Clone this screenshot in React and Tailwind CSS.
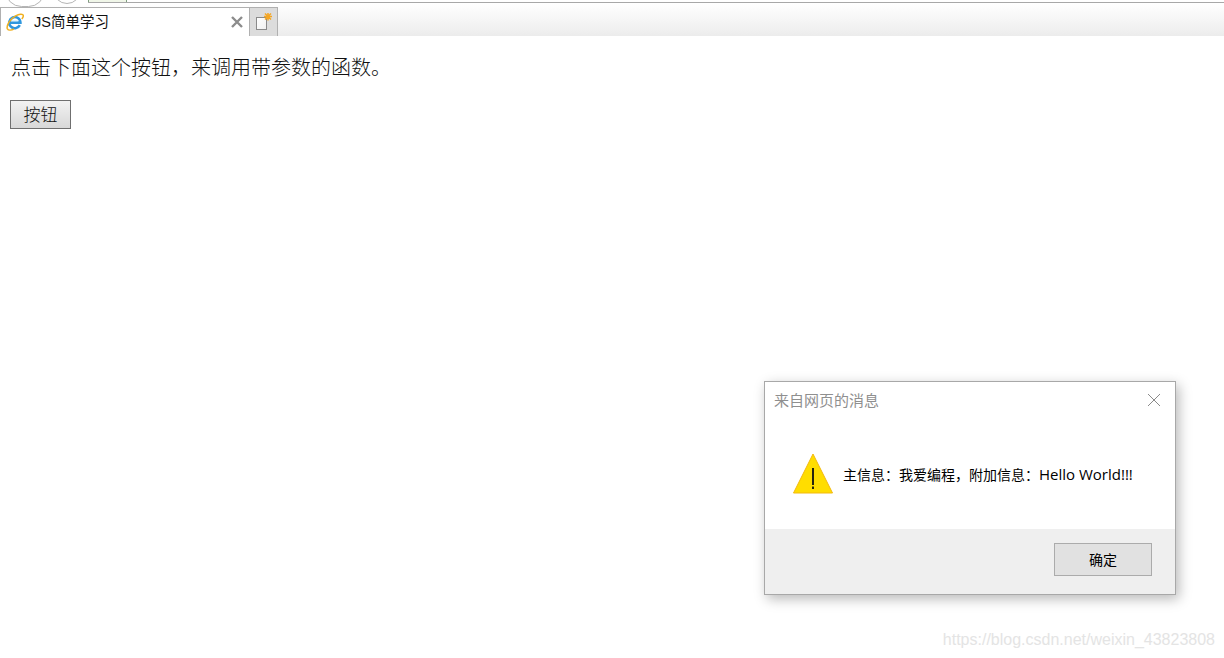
import React from "react";

const cjk = "font-['Liberation_Sans','Noto_Sans_CJK_SC',sans-serif]";

function IeIcon() {
  return (
    <svg width="18" height="18" viewBox="0 0 18 18" className="shrink-0">
      <path d="M13.8 12.2A5.6 5.6 0 1 1 14.4 9.6H4.6" fill="none" stroke="#2f97de" strokeWidth="2.6" />
      <path d="M5 8.2H11.8" stroke="#9fd6f5" strokeWidth="1" />
      <path d="M1.4 16C0.2 13 3.6 6 9.6 2.8C13 1 16.8 0.4 17.3 2.3C17.6 3.6 16.6 5 15.8 6" fill="none" stroke="#f0b020" strokeWidth="1.5" />
      <path d="M1.4 16C2.6 17.8 6 17 7.8 16" fill="none" stroke="#f0b020" strokeWidth="1.5" />
    </svg>
  );
}

function NewTabIcon() {
  return (
    <svg width="18" height="18" viewBox="0 0 18 18">
      <defs>
        <linearGradient id="ntp" x1="0" y1="0" x2="1" y2="1">
          <stop offset="0" stopColor="#ffffff" />
          <stop offset="1" stopColor="#f0f0f0" />
        </linearGradient>
      </defs>
      <rect x="1.5" y="4.5" width="10" height="12" fill="url(#ntp)" stroke="#8a8a8a" />
      <path d="M13 -0.5V7.5M9 3.5H17M10 0.5L16 6.5M16 0.5L10 6.5" stroke="#f5a623" strokeWidth="1.5" />
    </svg>
  );
}

export default function App() {
  return (
    <div className={`relative h-[658px] w-[1224px] overflow-hidden bg-white ${cjk}`}>
      <header className="relative flex h-[36px] flex-col bg-gradient-to-b from-[#ffffff] from-[10%] to-[#ececec]">
        <div className="absolute left-[5px] top-[-26px] h-[33px] w-[40px] rounded-full border border-[#b5b5b5] bg-white" />
        <div className="absolute left-[53px] top-[-26px] h-[30px] w-[28px] rounded-full border border-[#b5b5b5] bg-white" />

        <div className="flex h-[7px] items-start pl-[88px]">
          <div className="flex h-[3px] flex-1 items-start border-b border-[#a8a8a8]">
            <div className="h-[2px] w-[39px] border-x border-[#7f9f7f] bg-[#f0f6e8]" />
          </div>
        </div>

        <div className="relative flex h-[29px]">
          <div className="flex w-[249px] items-center border-t border-l border-[#b0b0b0] bg-white pl-[5px] pr-[5px]">
            <IeIcon />
            <span className="ml-[10px] flex-1 text-[14.5px] leading-[20px] text-[#111]">JS简单学习</span>
            <svg width="14" height="14" viewBox="0 0 14 14">
              <path d="M2 2L12 12M12 2L2 12" stroke="#8c8c8c" strokeWidth="2.4" />
            </svg>
          </div>
          <div className="flex w-[29px] items-center justify-center border-x border-t border-[#b0b0b0] bg-[#dcdcdc]">
            <NewTabIcon />
          </div>
        </div>
      </header>

      <main className="px-[11px] pt-[20px]">
        <p className="text-[20px] leading-[24px] font-light text-[#111]">点击下面这个按钮，来调用带参数的函数。</p>
        <button className="ml-[-1px] mt-[20px] flex h-[29px] w-[61px] items-center justify-center border border-[#6f6f6f] bg-gradient-to-b from-[#f2f2f2] to-[#d8d8d8] pt-[2px] text-[17px] font-light text-[#111]">
          按钮
        </button>
      </main>

      <div className="absolute left-[764px] top-[381px] flex h-[214px] w-[412px] flex-col border border-[#a8a8a8] bg-white shadow-[3px_4px_12px_rgba(0,0,0,0.28)]">
        <div className="flex h-[37px] items-center justify-between pl-[9px] pr-[14px]">
          <span className="pt-[1px] text-[15px] text-[#8f8f8f]">来自网页的消息</span>
          <svg width="14" height="14" viewBox="0 0 14 14" className="mt-[-1px]">
            <path d="M1 1L13 13M13 1L1 13" stroke="#8a8a8a" strokeWidth="1" />
          </svg>
        </div>
        <div className="flex flex-1 items-start pl-[28px] pt-[34px]">
          <svg width="40" height="41" viewBox="0 0 40 41" className="shrink-0">
            <path d="M20 1L39.5 40H0.5Z" fill="#ffdd00" stroke="#f2b90f" strokeWidth="1" />
            <path d="M20 15V32M20 33.5V36" stroke="#111" strokeWidth="1.8" />
          </svg>
          <span className="ml-[10px] mt-[11px] whitespace-nowrap text-[14px] leading-[20px] text-black">
            主信息：我爱编程，附加信息：
            <span className="font-['Open_Sans'] text-[15px]">Hello World!!!</span>
          </span>
        </div>
        <div className="flex h-[65px] items-start justify-end bg-[#efefef] pr-[23px] pt-[14px]">
          <button className="flex h-[33px] w-[98px] items-center justify-center border border-[#ababab] bg-[#e1e1e1] pt-[1px] text-[14px] text-black">
            确定
          </button>
        </div>
      </div>

      <div className="absolute bottom-[8px] right-[9px] font-['Liberation_Sans'] text-[16px] leading-[20px] text-[#e4e4e4]">
        https://blog.csdn.net/weixin_43823808
      </div>
    </div>
  );
}
